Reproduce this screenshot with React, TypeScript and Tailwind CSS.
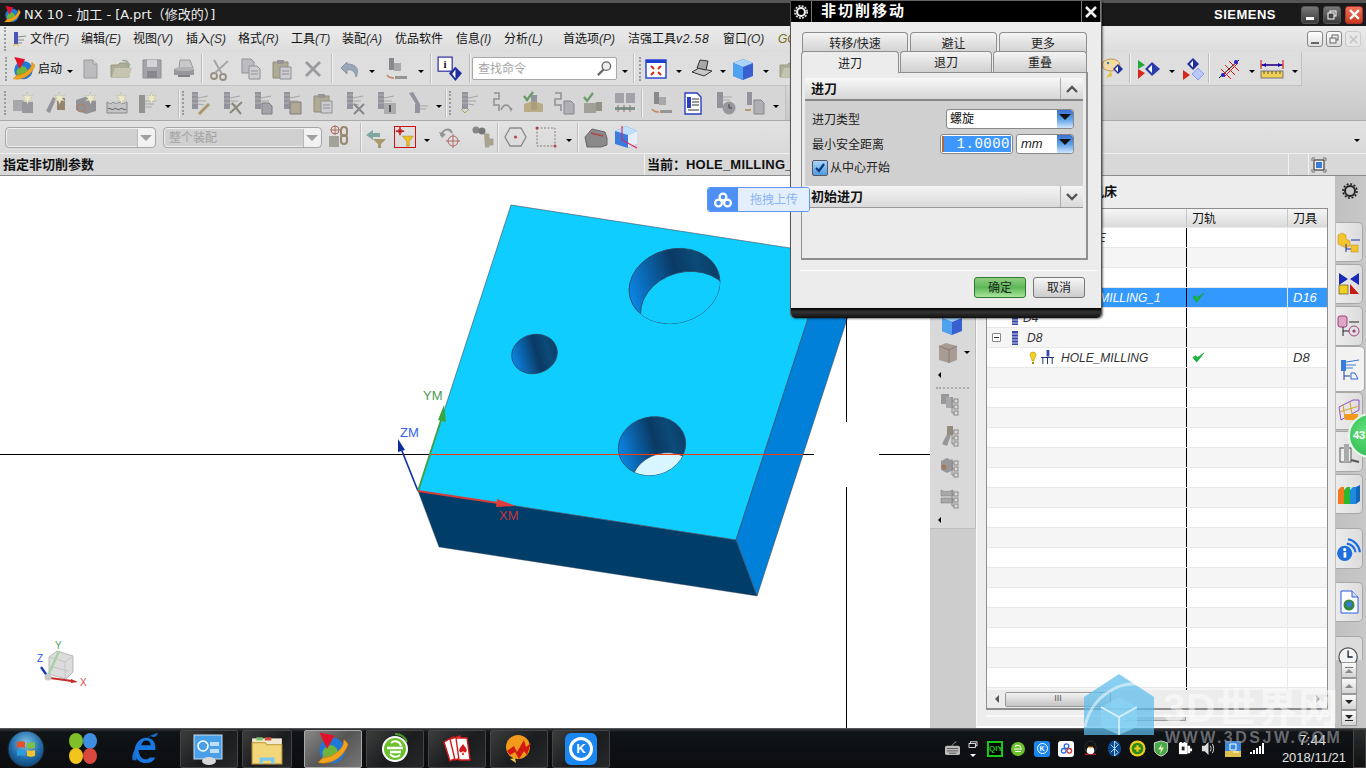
import React from "react";

type P = { children?: React.ReactNode; c?: string; v?: string };
const S = ({ children, c = "w-[24px] h-[24px]", v = "0 0 24 24" }: P) => (
  <svg viewBox={v} className={c + " block"}>{children}</svg>
);

const Slot = ({ c, children }: { c: string; children?: React.ReactNode }) => (
  <div className={c + " h-full flex items-center justify-center shrink-0"}>{children}</div>
);
const Caret = ({ c, dark = true }: { c: string; dark?: boolean }) => (
  <div className={c + " h-full flex items-center justify-center shrink-0 pt-[6px]"}>
    <div className={"w-0 h-0 border-x-[3px] border-x-transparent border-t-[3px] " + (dark ? "border-t-black" : "border-t-[#444]")} />
  </div>
);
const Sep = ({ c }: { c: string }) => (
  <div className={c + " h-full flex items-center justify-center shrink-0"}>
    <div className="w-[2px] h-[29px] bg-[#f2f2f2] border-l border-[#bdbdbd]" />
  </div>
);
const Grip = ({ c }: { c: string }) => (
  <div className={c + " h-full flex items-center justify-center shrink-0"}>
    <div className="w-[2px] h-[24px] border-l-2 border-dotted border-[#9a9a9a]" />
  </div>
);

/* ---------- toolbar icons ---------- */
const NXLogo = ({ c = "w-[26px] h-[26px]" }: { c?: string }) => (
  <S c={c}>
    <circle cx="11.5" cy="13" r="8.5" fill="#1f78d8" />
    <path d="M6 12c3-4 8-3 9 1s-2 7-6 6-5-4-3-7z" fill="#6db53c" />
    <path d="M2 21c8 2 17-3 20-12-1-2-2-3-3-3 1 5-6 11-13 12l1-2z" fill="#f2a21c" stroke="#c9770a" strokeWidth=".4" />
    <path d="M3 1l10 2-5 9z" fill="#e3122a" />
  </S>
);
const G = "#a8a8ab";
const D = "#88888d";
const Doc = () => <S><path d="M6 3h9l4 4v14H6z" fill="#bcbcbe" stroke="#9a9a9c" /><path d="M15 3v4h4" fill="#dcdcdc" stroke="#9a9a9c" /></S>;
const Folder = () => <S><path d="M2 8h7l2-2h9v14H2z" fill="#aeae98" stroke="#999a80" /><path d="M3 20l3-9h17l-3 9z" fill="#c4c4b0" /><path d="M13 3c4-1 7 1 7 4l2 0-3 3-3-3h2c0-2-2-3-5-3z" fill="#98ae98" /></S>;
const Save = () => <S><path d="M3 3h18v18H3z" fill="#a4a4aa" stroke="#8e8e94" /><path d="M7 3h10v7H7z" fill="#d4d4d6" /><path d="M7 14h10v7H7z" fill="#88888d" /></S>;
const Printer = () => <S><path d="M8 3h10l3 8H7z" fill="#c8c8ca" stroke="#9a9a9c" /><path d="M2 12h20v6H2z" fill="#98989c" /><path d="M6 18h12v2H6z" fill="#808084" /><ellipse cx="12" cy="12" rx="10" ry="2" fill="#b2b2b5" /></S>;
const Scissors = () => <S><circle cx="6" cy="19" r="3" fill="none" stroke="#96907e" strokeWidth="1.800" /><circle cx="15" cy="20" r="3" fill="none" stroke="#96907e" strokeWidth="1.800" /><path d="M7 16L20 4M14 17L6 3" stroke="#a6a6a6" strokeWidth="2" /></S>;
const CopyI = () => <S><path d="M3 2h9l3 3v11H3z" fill="#bcbcc0" stroke="#909095" /><path d="M10 9h8l3 3v10H10z" fill="#cdcdd1" stroke="#909095" /><path d="M12 14h7M12 17h7" stroke="#909095" /></S>;
const Paste = () => <S><path d="M3 5h15v16H3z" fill="#aeaa94" stroke="#908d78" /><path d="M7 3h7v4H7z" fill="#969696" /><path d="M10 10h11v12H10z" fill="#cdcdd1" stroke="#909095" /><path d="M12 14h7M12 17h7" stroke="#909095" /></S>;
const XI = () => <S><path d="M5 5l14 14M19 5L5 19" stroke="#9a9a9e" strokeWidth="2.800" /></S>;
const Undo = () => <S><path d="M9 5L3 11l6 6v-4c5-1 8 1 9 7 3-6 2-13-9-13z" fill="#9aa7ba" stroke="#8794a8" /></S>;
const Mach = () => <S><rect x="4" y="1" width="5" height="12" fill={D} /><path d="M9 6h7v8H9z" fill={G} /><path d="M10 19h12v3H10z" fill="#969696" /><path d="M2 18c2 3 4 3 7 3" stroke="#c28a6a" strokeWidth="1.6" fill="none" /></S>;
const InfoD = () => (
  <S c="w-[26px] h-[26px]">
    <rect x="1" y="1" width="13" height="13" fill="#fff" stroke="#1a1a9a" />
    <text x="7.5" y="11" fontSize="10" fontWeight="700" textAnchor="middle" fontFamily="Liberation Serif" fill="#111">i</text>
    <path d="M17 10l6 6-6 7-6-7z" fill="#1f2f9e" /><path d="M17 12.5v8l-3-4z" fill="#fff" />
  </S>
);
const Fit = () => (
  <S><rect x="2" y="3" width="20" height="18" fill="#fff" stroke="#1f3fcf" strokeWidth="1.4" /><rect x="2" y="3" width="20" height="3" fill="#1f3fcf" /><path d="M7 9l3 3M17 9l-3 3M7 18l3-3M17 18l-3-3" stroke="#e02a10" strokeWidth="2" /></S>
);
const Open = () => <S><path d="M2 15l7-4 13 3-8 5z" fill="#c8c8c8" stroke="#333" /><path d="M7 11l3-8 8 1-2 9z" fill="#a8a8a8" stroke="#333" /></S>;
const Cube = ({ c }: { c?: string }) => <S c={c}><path d="M12 2l10 4v13l-10 4-10-4V6z" fill="#3a5fd0" /><path d="M2 6l10-4 10 4-10 4z" fill="#a7d4f7" /><path d="M2 6l10 4v13L2 19z" fill="#4fa2ee" /></S>;
const PaintPal = () => <S><ellipse cx="10" cy="8" rx="9" ry="6" fill="#f4d9a8" stroke="#bb9355" /><circle cx="7" cy="6" r="1.2" fill="#28a" /><circle cx="11" cy="5" r="1.2" fill="#ee4" /><path d="M10 14l-5 7 6-2z" fill="#e8c03c" /><path d="M17 7l5 5-5 5-5-5z" fill="#1f2f9e" /><path d="M17 9v6l-3-3z" fill="#fff" /></S>;
const FlagsD = () => <S><path d="M1 3l7 5-7 4z" fill="#23a83c" /><path d="M1 12l7 4-7 6z" fill="#d7261e" /><path d="M15 5l8 7-8 7-7-7z" fill="#2a3da8" /><path d="M15 8v8l-4-4z" fill="#fff" /></S>;
const FlagsD2 = () => <S><path d="M12 1l6 6-6 6-6-6z" fill="#1f2f9e" /><path d="M12 3.5v7l-3-3.5z" fill="#fff" /><path d="M2 13l7 5-7 5z" fill="#d7261e" /><path d="M17 11l6 6-6 6-6-6z" fill="#b8c8f8" stroke="#8aa0ee" /></S>;
const Grid = () => <S><path d="M1 21L21 3" stroke="#111" /><path d="M3 12l10 10M7 8l10 10M11 4l10 10" stroke="#e11" /><path d="M6 20l14-14" stroke="#e11" /><circle cx="5" cy="18" r="2" fill="#22c" /><circle cx="18" cy="5" r="2" fill="#22c" /></S>;
const Ruler = () => <S><path d="M1 8h22M1 3v9M23 3v9" stroke="#c00" strokeWidth="1" /><path d="M2 8h20" stroke="#11a" strokeWidth="1.4" /><path d="M2 8l4-2v4zM22 8l-4-2v4z" fill="#11a" /><rect x="1" y="14" width="22" height="7" fill="#f0d050" stroke="#777" /><path d="M4 14v3M8 14v3M12 14v3M16 14v3M20 14v3" stroke="#555" /></S>;

const Op = ({ children }: P) => (
  <S>
    <rect x="4" y="1" width="6" height="17" fill="#93939d" />
    <path d="M4 4h6M4 8h6M4 12h6" stroke="#b0b0b0" />
    <path d="M10 7l10-2M10 10h8M10 13l6 1" stroke="#a6a6a6" strokeWidth="1.2" />
    {children}
  </S>
);
const Spark = ({ children }: P) => (
  <S>
    {children}
    <path d="M16 1l1.6 4 4-1-2.6 3.4 3 2.6-4-.4-1.4 4-1.4-4-4 .4 3-2.6L11.400 4l4 1z" fill="#eeebc4" stroke="#aaa" strokeWidth=".4" />
  </S>
);
const Check = () => <path d="M2 6l3 4 6-8" stroke="#6a9a6a" strokeWidth="2.2" fill="none" />;

const Row1 = () => (
  <div className="h-[34px] w-[1302px] flex bg-[#dedede] border-r border-b border-[#c2c2c2] pl-[3px]">
    <Grip c="w-[6px]" />
    <Slot c="w-[29px]"><NXLogo /></Slot>
    <div className="w-[26px] h-full flex items-center text-[12px] shrink-0">启动</div>
    <Caret c="w-[11px]" />
    <Slot c="w-[30px]"><Doc /></Slot>
    <Slot c="w-[31px]"><Folder /></Slot>
    <Slot c="w-[32px]"><Save /></Slot>
    <Slot c="w-[31px]"><Printer /></Slot>
    <Sep c="w-[6px]" />
    <Slot c="w-[30px]"><Scissors /></Slot>
    <Slot c="w-[31px]"><CopyI /></Slot>
    <Slot c="w-[31px]"><Paste /></Slot>
    <Slot c="w-[32px]"><XI /></Slot>
    <Sep c="w-[6px]" />
    <Slot c="w-[29px]"><Undo /></Slot>
    <Caret c="w-[16px]" />
    <Slot c="w-[33px]"><Mach /></Slot>
    <Caret c="w-[16px]" />
    <Sep c="w-[4px]" />
    <Slot c="w-[34px]"><InfoD /></Slot>
    <Sep c="w-[5px]" />
    <div className="w-[145px] h-[23px] mt-[5px] shrink-0 bg-white border border-[#a8a8a8] rounded-[2px] flex items-center justify-between pl-[5px] pr-[3px] text-[12px] text-[#a4a4a4]">
      查找命令
      <svg viewBox="0 0 18 18" className="w-[17px] h-[17px]"><circle cx="11" cy="6.500" r="4.500" fill="#eee" stroke="#666" strokeWidth="1.400" /><path d="M8 10l-6 6" stroke="#666" strokeWidth="2.400" /></svg>
    </div>
    <Caret c="w-[15px]" />
    <Sep c="w-[4px]" />
    <Grip c="w-[8px]" />
    <Slot c="w-[24px]"><Fit /></Slot>
    <Caret c="w-[22px]" />
    <Slot c="w-[24px]"><Open /></Slot>
    <Caret c="w-[17px]" />
    <Slot c="w-[24px]"><Cube /></Slot>
    <Caret c="w-[22px]" />
    <Slot c="w-[26px]"><Folder /></Slot>
    <div className="w-[297px] shrink-0" />
    <Slot c="w-[26px]"><PaintPal /></Slot>
    <Sep c="w-[7px]" />
    <Slot c="w-[31px]"><FlagsD /></Slot>
    <Caret c="w-[16px]" />
    <Slot c="w-[25px]"><FlagsD2 /></Slot>
    <Sep c="w-[8px]" />
    <Slot c="w-[34px]"><Grid /></Slot>
    <Caret c="w-[10px]" />
    <Slot c="w-[30px]"><Ruler /></Slot>
    <Caret c="w-[15px]" />
  </div>
);

const Row2 = () => (
  <div className="h-[34px] w-[786px] flex bg-[#d6d6d6] border-r border-[#c2c2c2] pl-[3px]">
    <Grip c="w-[4px]" />
    <Slot c="w-[31px]"><Spark><rect x="2" y="9" width="11" height="11" fill={G} /><rect x="11" y="11" width="11" height="11" fill="#98989c" /></Spark></Slot>
    <Slot c="w-[34px]"><Spark><path d="M3 20l7-14 3 2-6 14z" fill="#94949a" /><rect x="14" y="7" width="8" height="12" fill="#94866a" /></Spark></Slot>
    <Slot c="w-[27px]"><Spark><path d="M2 9l9-3 11 4v10l-10 3-10-4z" fill="#929296" /><circle cx="7" cy="17" r="4" fill="none" stroke="#b87a5c" /></Spark></Slot>
    <Slot c="w-[36px]"><Spark><path d="M2 11c3 2 4 2 6 0 3 2 4 2 6 0 3 2 4 2 8 0v11H2z" fill="#c4c4c6" stroke="#86868b" /><path d="M3 18c2-2 4 2 6 0s4 2 6 0 4 2 6 0" stroke="#555" fill="none" /></Spark></Slot>
    <Slot c="w-[24px]"><Spark><rect x="4" y="4" width="6" height="18" fill="#94948e" /><path d="M10 10h11M10 13h9M10 16h7" stroke="#aaa" /></Spark></Slot>
    <Caret c="w-[18px]" />
    <Sep c="w-[4px]" />
    <Grip c="w-[4px]" />
    <Slot c="w-[30px]"><Op><path d="M10 22l7-7 3-3 2 2-3 3-7 7z" fill="#a8946a" /></Op></Slot>
    <Slot c="w-[34px]"><Op><path d="M10 22L22 11M12 12l9 11" stroke="#88887c" strokeWidth="2" /></Op></Slot>
    <Slot c="w-[27px]"><Op><path d="M11 12h7l3 3v8H11z" fill="#a4a4a8" stroke="#7c7c82" /></Op></Slot>
    <Slot c="w-[32px]"><Op><path d="M10 11h11v12H10z" fill="#aea894" stroke="#7c7c82" /></Op></Slot>
    <Slot c="w-[30px]"><Paste /></Slot>
    <Slot c="w-[33px]"><Op><path d="M11 13l10 10M21 13L11 23" stroke="#88888d" strokeWidth="2.200" /></Op></Slot>
    <Slot c="w-[30px]"><Op><rect x="10" y="12" width="12" height="11" fill="#acacb0" /><rect x="15" y="14" width="2" height="7" fill="#555" /></Op></Slot>
    <Slot c="w-[33px]"><S><path d="M3 2l4-1 7 12-3 2z" fill="#93939d" /><rect x="9" y="13" width="5" height="9" fill="#93939d" /><path d="M14 15h8M14 18h6" stroke="#a6a6a6" /></S></Slot>
    <Caret c="w-[10px]" />
    <Sep c="w-[4px]" />
    <Grip c="w-[4px]" />
    <Slot c="w-[36px]"><Op><path d="M3 18l4 4 4-4" stroke="#b5a060" fill="none" /></Op></Slot>
    <Slot c="w-[27px]"><S><path d="M4 2H9V8H4v6h5v6" stroke="#939393" strokeWidth="1.600" fill="none" /><path d="M11 19c3-7 8-6 10 0l1-2" stroke="#939393" strokeWidth="1.600" fill="none" /></S></Slot>
    <Slot c="w-[36px]"><S><rect x="10" y="4" width="6" height="15" fill="#93939d" /><path d="M3 13l9-3 10 3v8H3z" fill="#b0a070" opacity=".8" /><path d="M3 5l3 4 6-8" stroke="#6a9a6a" strokeWidth="2.400" fill="none" /></S></Slot>
    <Slot c="w-[25px]"><S><path d="M3 2h6v6H3v6h6v6" stroke="#939393" strokeWidth="1.600" fill="none" /><path d="M12 10h7l3 3v10H12z" fill="#b0b0b4" stroke="#86868b" /></S></Slot>
    <Slot c="w-[36px]"><S><Check /><path d="M2 12h12v10H2z" fill="#a0a098" /><rect x="14" y="11" width="6" height="9" fill="#929288" /></S></Slot>
    <Slot c="w-[26px]"><S><path d="M2 2h9v10H2zM13 2h9v10h-9z" fill="#a2a2a8" /><path d="M2 16h20v3H2z" fill="#7a9a90" /><path d="M5 14v7M11 14v7M17 14v7" stroke="#a06a6a" /></S></Slot>
    <Sep c="w-[8px]" />
    <Slot c="w-[32px]"><Mach /></Slot>
    <Slot c="w-[30px]"><S><path d="M4 2h12l4 4v17H4z" fill="#fff" stroke="#2a3fbf" strokeWidth="1.400" /><rect x="6" y="6" width="4" height="11" fill="#2a3fbf" /><path d="M11 8h7M11 11h7M11 14h7M7 19h11" stroke="#333" /></S></Slot>
    <Slot c="w-[34px]"><S><rect x="4" y="1" width="6" height="16" fill="#93939d" /><path d="M10 6h9M10 9h7" stroke="#aaa" /><circle cx="16" cy="17" r="6.500" fill="#98989c" /><path d="M16 13v4h3" stroke="#444" fill="none" /></S></Slot>
    <Slot c="w-[26px]"><S><rect x="4" y="1" width="5" height="13" fill="#93939d" /><path d="M11 9h7l3 3v11H11z" fill="#aeaeb3" stroke="#86868b" /><path d="M2 19h6" stroke="#b08a5c" strokeWidth="1.600" /></S></Slot>
    <Caret c="w-[15px]" />
  </div>
);

const DD = ({ c, t }: { c: string; t?: string }) => (
  <div className={c + " h-[19px] mt-[7px] shrink-0 bg-[#d0d0d0] border border-[#f0f0f0] outline outline-[#a6a6a6] rounded-[3px] flex items-center justify-between text-[12px] text-[#a2a2a2] pl-[4px]"}>
    <span>{t}</span>
    <span className="w-[17px] h-[18px] bg-[#f2f2f2] border-l border-[#bbb] flex items-center justify-center">
      <span className="w-0 h-0 border-x-[6px] border-x-transparent border-t-[6px] border-t-[#a0a0a0]" />
    </span>
  </div>
);

const Row3 = () => (
  <div className="h-[33px] flex bg-[linear-gradient(#e2e2e2,#d9d9d9)] border-t border-[#a9a9a9]">
    <div className="w-[6px] shrink-0" />
    <DD c="w-[149px]" />
    <div className="w-[9px] shrink-0" />
    <DD c="w-[157px]" t="整个装配" />
    <Slot c="w-[38px]"><S><rect x="1" y="11" width="10" height="11" fill="#a2a29a" /><circle cx="7" cy="5" r="4" fill="none" stroke="#b06a60" /><path d="M7 0v10M2 5h10" stroke="#b06a60" /><rect x="13" y="2" width="6" height="9" rx="3" fill="none" stroke="#968870" strokeWidth="2" /><rect x="13" y="10" width="6" height="9" rx="3" fill="none" stroke="#968870" strokeWidth="2" /></S></Slot>
    <Sep c="w-[4px]" />
    <Slot c="w-[24px]"><S><path d="M10 5L3 10l7 5v-3h7V8h-7z" fill="#7fa8a0" /><path d="M10 14h13l-5 5v4h-3v-4z" fill="#a8986a" /></S></Slot>
    <Slot c="w-[36px]">
      <div className="w-[22px] h-[22px] border border-[#cc1111] flex items-center justify-center">
        <S c="w-[20px] h-[20px]"><path d="M6 0v10M1 5h10" stroke="#900" strokeWidth="1.400" /><circle cx="6" cy="5" r="2.500" fill="none" stroke="#e11" /><path d="M9 11h13l-5 6v6h-3v-6z" fill="#f0c020" stroke="#a07c10" strokeWidth=".6" /></S>
      </div>
    </Slot>
    <Caret c="w-[8px]" />
    <Slot c="w-[38px]"><S><path d="M3 11C5 3 12 3 14 8" stroke="#939393" strokeWidth="2" fill="none" /><path d="M1 7l3 6 4-4z" fill="#939393" /><circle cx="15" cy="16" r="5" fill="none" stroke="#b06a60" /><path d="M15 9v14M8 16h14" stroke="#b06a60" /></S></Slot>
    <Slot c="w-[26px]"><S><circle cx="6" cy="5" r="3.500" fill="#868686" /><circle cx="12" cy="6" r="3.500" fill="#767676" /><path d="M14 9h5v13h-4M17 14h6v6h-6z" stroke="#a2a2a2" fill="#ada288" /></S></Slot>
    <Sep c="w-[6px]" />
    <Slot c="w-[28px]"><S><path d="M7 3h11l5 9-5 9H7l-5-9z" fill="none" stroke="#8a8a8a" strokeWidth="1.300" /><circle cx="12.500" cy="12" r="1.500" fill="#b0444c" /></S></Slot>
    <Slot c="w-[34px]"><S><rect x="3" y="3" width="18" height="18" fill="none" stroke="#8a7a7a" strokeDasharray="2 1.500" /><circle cx="3" cy="3" r="1.500" fill="#b0444c" /><circle cx="21" cy="21" r="1.500" fill="#b0444c" /></S></Slot>
    <Caret c="w-[12px]" />
    <Sep c="w-[6px]" />
    <Slot c="w-[30px]"><S><path d="M1 12L8 4l13 3 2 6v7L17 22H3z" fill="#8a8a8a" stroke="#666" /><path d="M7 8l12 3" stroke="#b04444" strokeWidth="1.400" /></S></Slot>
    <Slot c="w-[30px]"><S><path d="M12 1l11 5v13l-9 4-13-4V6z" fill="#3a7be0" /><path d="M1 6l11-5 11 5-9 4z" fill="#bfe0fb" /><path d="M14 10l9-4v13l-9 4z" fill="#e8eef8" /><path d="M8 1v14l15 8" stroke="#e0205a" strokeWidth="1.100" fill="none" /></S></Slot>
    <div className="flex-1" />
    <Caret c="w-[18px]" />
  </div>
);

/* ---------- viewport ---------- */
const Viewport = () => (
  <svg viewBox="0 176 930 552" className="w-[930px] h-[552px] block shrink-0 bg-white">
    <defs>
      <linearGradient id="wall" x1="0" x2="1" y1="0" y2="0">
        <stop offset="0" stopColor="#0b86e6" />
        <stop offset=".55" stopColor="#0a3a64" />
        <stop offset=".8" stopColor="#0c4a78" />
        <stop offset="1" stopColor="#0b3f6a" />
      </linearGradient>
      <clipPath id="h1"><ellipse cx="674.500" cy="286" rx="46" ry="37" transform="rotate(-15 674.500 286)" /></clipPath>
      <clipPath id="h3"><ellipse cx="652" cy="446" rx="34" ry="29" transform="rotate(-15 652 446)" /></clipPath>
    </defs>
    <path d="M511 205L829 254 736 540 418 491z" fill="#10cdff" stroke="#3a4a5a" strokeWidth=".6" />
    <path d="M829 254L850 310 757 596 736 540z" fill="#0080d9" stroke="#3a4a5a" strokeWidth=".6" />
    <path d="M418 491L736 540 757 596 439 547z" fill="#003d69" stroke="#556" strokeWidth=".4" />

    <ellipse cx="674.500" cy="286" rx="46" ry="37" transform="rotate(-15 674.500 286)" fill="url(#wall)" stroke="#2a4a66" strokeWidth=".8" />
    <g clipPath="url(#h1)"><ellipse cx="686" cy="309" rx="46" ry="37" transform="rotate(-15 686 309)" fill="#10cdff" stroke="#2a4a66" strokeWidth=".8" /></g>
    <ellipse cx="534.500" cy="354" rx="23" ry="19.500" transform="rotate(-15 534.500 354)" fill="url(#wall)" stroke="#2a4a66" strokeWidth=".8" />
    <ellipse cx="652" cy="446" rx="34" ry="29" transform="rotate(-15 652 446)" fill="url(#wall)" stroke="#2a4a66" strokeWidth=".8" />
    <g clipPath="url(#h3)"><ellipse cx="665" cy="482" rx="34" ry="29" transform="rotate(-15 665 482)" fill="#d8f6ff" stroke="#2a4a66" strokeWidth=".8" /></g>

    <path d="M0 454.500H430M803 454.500H814M879 454.500H930" stroke="#000" strokeWidth="1" />
    <path d="M430 454.500H803" stroke="#ff3a00" strokeWidth="1" />
    <path d="M846.500 318V422M846.500 487V728" stroke="#000" strokeWidth="1" />

    <path d="M418 491L402 451" stroke="#0a2da0" strokeWidth="1.600" />
    <path d="M398 439l7 11-7 2z" fill="#0a2da0" />
    <text x="400" y="437" fontSize="13" fill="#3a62e8" fontFamily="Liberation Sans">ZM</text>
    <path d="M418 491L441 420" stroke="#3fa03f" strokeWidth="1.800" />
    <path d="M444 405l2 17-8-2z" fill="#3aa53a" />
    <text x="423" y="400" fontSize="13" fill="#4f9a55" fontFamily="Liberation Sans">YM</text>
    <path d="M418 491L498 503" stroke="#d83a3a" strokeWidth="1.800" />
    <path d="M516 506l-19-7-1 8z" fill="#e23b3b" />
    <text x="499" y="520" fontSize="13" fill="#c9323c" fontFamily="Liberation Sans">XM</text>

    <g>
      <path d="M49 657l8-6 16 5 0 16-7 7-17-5z" fill="#dcdcdc" stroke="#b8b8b8" />
      <path d="M49 657l16 5 8-6M65 662v17M53 667l15 4" stroke="#c4c4c4" fill="none" />
      <path d="M48 676L59 651" stroke="#a6d2a6" strokeWidth="2.400" />
      <path d="M48 677l-7-10" stroke="#1a3bb8" strokeWidth="2.400" />
      <path d="M50 678l22 3" stroke="#c82a2a" strokeWidth="2" />
      <path d="M78 682l-7-3v4z" fill="#c82a2a" />
      <circle cx="48" cy="677" r="3.500" fill="#c8c8c8" />
      <text x="55" y="649" fontSize="10" fill="#4fa05a" fontFamily="Liberation Sans">Y</text>
      <text x="37" y="662" fontSize="10" fill="#2a5adf" fontFamily="Liberation Sans">Z</text>
      <text x="80" y="686" fontSize="10" fill="#d84a4a" fontFamily="Liberation Sans">X</text>
    </g>
  </svg>
);

/* ---------- left palette ---------- */
const Tree = () => (
  <>
    <rect x="14" y="6" width="4" height="4" fill="none" stroke="#888" />
    <rect x="14" y="12" width="4" height="4" fill="none" stroke="#888" />
    <rect x="14" y="18" width="4" height="4" fill="none" stroke="#888" />
    <path d="M12 4v16h2M12 8h2M12 14h2" stroke="#888" fill="none" />
  </>
);
const LeftBar = () => (
  <div className="w-[46px] shrink-0 h-full bg-[#cdcdcd]">
    <div className="h-[353px] bg-[#d9d9d9] border-b border-r border-[#bdbdbd] flex flex-col">
      <div className="h-[134px] shrink-0" />
      <div className="h-[28px] flex items-center pl-[10px] shrink-0"><Cube c="w-[24px] h-[24px]" /></div>
      <div className="h-[28px] flex items-center pl-[6px] shrink-0">
        <S><path d="M3 6l7-3 11 3v14l-8 3-10-3z" fill="#a69c94" /><path d="M3 6l10 4v13M13 10l8-4" stroke="#867c74" fill="none" /></S>
        <div className="w-0 h-0 ml-[4px] border-x-[3px] border-x-transparent border-t-[3px] border-t-black" />
      </div>
      <div className="h-[18px] flex items-center pl-[8px] shrink-0"><div className="w-0 h-0 border-y-[3px] border-y-transparent border-r-[3px] border-r-black" /></div>
      <div className="h-[3px] mx-[6px] border-t-2 border-dotted border-[#aaa] shrink-0 mt-[3px]" />
      <div className="pl-[10px] flex flex-col gap-[7px] mt-[3px]">
        <S><rect x="1" y="1" width="8" height="10" fill="#98989c" /><rect x="6" y="4" width="7" height="11" fill="#a8a8ac" /><Tree /></S>
        <S><path d="M2 20l5-10 4 1-4 11z" fill="#98989c" /><rect x="7" y="2" width="6" height="9" fill="#948c7c" /><Tree /></S>
        <S><path d="M1 6l6-3 6 3v9l-6 3-6-3z" fill="#98989c" /><circle cx="4" cy="12" r="2.500" fill="#a07a5c" /><Tree /></S>
        <S><path d="M1 4c3 2 8 2 12 0v6H1zM1 12h12v5H1z" fill="#a8a8ac" stroke="#777" strokeWidth=".5" /><Tree /></S>
      </div>
      <div className="h-[18px] flex items-center pl-[8px] mt-[2px]"><div className="w-0 h-0 border-y-[3px] border-y-transparent border-r-[3px] border-r-black" /></div>
    </div>
  </div>
);

/* ---------- navigator ---------- */
const Chk = () => (
  <svg viewBox="0 0 14 14" className="w-[13px] h-[13px] block"><path d="M1 7l4 5 8-10-7 5-2-2z" fill="#18b83c" stroke="#0f9a2c" strokeWidth=".6" /></svg>
);
const Dr = () => (
  <svg viewBox="0 0 8 14" className="w-[8px] h-[14px] block shrink-0"><rect x="1" y="0" width="6" height="14" fill="#3a46a8" /><path d="M1 3h6M1 6h6M1 9h6M1 12h6" stroke="#c8d0f0" /></svg>
);
const rows: { a?: React.ReactNode; b?: boolean; d?: string; sel?: boolean }[] = [
  { a: <span className="pl-[2px] italic">GENERIC_MACHINE</span> },
  {},
  {},
  { a: <span className="pl-[73px]">HOLE_MILLING_1</span>, b: true, d: "D16", sel: true },
  { a: <span className="pl-[24px] flex items-center gap-[4px]"><Dr />D4</span> },
  {
    a: (
      <span className="pl-[5px] flex items-center">
        <span className="w-[9px] h-[9px] border border-[#888] rounded-[1px] bg-white flex items-center justify-center mr-[10px]"><span className="w-[5px] h-px bg-[#333]" /></span>
        <Dr />
        <span className="ml-[8px]">D8</span>
      </span>
    ),
  },
  {
    a: (
      <span className="pl-[42px] flex items-center">
        <svg viewBox="0 0 8 14" className="w-[8px] h-[14px] shrink-0"><path d="M1 4a3 3 0 116 0c0 2-2 3-2 6H3c0-3-2-4-2-6z" fill="#f2d020" stroke="#a08810" strokeWidth=".5" /><rect x="3" y="11" width="2" height="2" fill="#a08810" /></svg>
        <svg viewBox="0 0 16 16" className="w-[15px] h-[15px] ml-[3px] shrink-0"><rect x="7" y="0" width="3" height="7" fill="#3a46a8" /><path d="M1 8h14M3 8v7M8 8v7M13 8v7" stroke="#1a2a70" fill="none" /></svg>
        <span className="ml-[6px]">HOLE_MILLING</span>
      </span>
    ),
    b: true,
    d: "D8",
  },
  ...Array.from({ length: 17 }, () => ({})),
];

const Nav = () => (
  <div className="w-[359px] shrink-0 h-full bg-[#ededed] border-l border-[#f8f8f8] flex flex-col pl-[9px] pr-[7px] border-b-2 border-b-white">
    <div className="h-[32px] w-[140px] -ml-[9px] text-right text-[13px] font-bold flex items-center justify-end shrink-0">工序导航器 - 机床</div>
    <div className="h-[502px] w-[342px] border-2 border-[#8e8e8e] border-t border-r border-l bg-white flex flex-col overflow-hidden shrink-0">
      <div className="h-[19px] flex shrink-0 text-[12px] bg-[linear-gradient(#f6f6f6,#dadada)] border-b border-[#e8e8e8] text-[#111]">
        <div className="w-[200px] border-r border-[#c8c8c8] shrink-0" />
        <div className="w-[101px] border-r border-[#c8c8c8] shrink-0 pl-[5px] leading-[20px]">刀轨</div>
        <div className="flex-1 pl-[5px] leading-[20px]">刀具</div>
      </div>
      <div className="flex-1 overflow-hidden">
        {rows.map((r, i) => (
          <div key={i} className={"h-[20px] flex text-[12px] italic items-center border-b border-[#e8e8e8] " + (r.sel ? "bg-[#3399ff] text-white" : i % 2 ? "bg-[#f5f5f5] text-[#333]" : "bg-white text-[#333]")}>
            <div className="w-[200px] shrink-0 h-full flex items-center border-r border-black font-['Liberation_Sans']">{r.a}</div>
            <div className="w-[101px] shrink-0 h-full flex items-center pl-[5px] border-r border-[#e8e8e8]">{r.b && <Chk />}</div>
            <div className="flex-1 pl-[5px] text-[13px] font-['Liberation_Sans']">{r.d}</div>
          </div>
        ))}
      </div>
      <div className="h-[18px] shrink-0 flex items-center bg-[#ececec] pl-[8px] relative">
        <div className="w-0 h-0 border-y-[4px] border-y-transparent border-r-[4px] border-r-[#555]" />
        <div className="ml-[6px] w-[106px] h-[15px] border border-[#999] rounded-[2px] bg-[linear-gradient(#f2f2f2,#c4c4c4)] flex items-center justify-center text-[9px] text-[#555]">III</div>
        <div className="ml-auto mr-[7px] w-0 h-0 border-y-[4px] border-y-transparent border-l-[4px] border-l-[#aaa]" />
      </div>
    </div>
    <div className="mt-[5px] h-[4px] border-t-2 border-[#f8f8f8] flex">
      <div className="ml-[139px] w-[61px] h-[4px] bg-[#cfcfcf] border-b border-r border-[#999]" />
    </div>
  </div>
);

/* ---------- right tab bar ---------- */
const Tab = ({ c, children }: { c: string; children?: React.ReactNode }) => (
  <div className={c + " w-[27px] shrink-0 bg-[linear-gradient(90deg,#ececec,#dcdcdc)] border border-l-0 border-[#a8a8a8] rounded-r-[5px] flex items-center justify-center"}>{children}</div>
);
const Spin = ({ up, bar }: { up?: boolean; bar?: boolean }) => (
  <div className="w-[16px] h-[16px] border border-[#999] bg-[linear-gradient(#fafafa,#d4d4d4)] flex flex-col items-center justify-center gap-px">
    {bar && up && <div className="w-[8px] h-px bg-[#777]" />}
    <div className={"w-0 h-0 border-x-[4px] border-x-transparent " + (up ? "border-b-[4px] border-b-[#888]" : "border-t-[4px] border-t-[#222]")} />
    {bar && !up && <div className="w-[8px] h-px bg-[#222]" />}
  </div>
);
const RightBar = () => (
  <div className="w-[31px] shrink-0 h-full bg-[linear-gradient(90deg,#c0c0c0,#c8c8c8)] flex flex-col pl-px relative overflow-hidden">
    <div className="h-[30px] flex items-center justify-center pr-[2px] shrink-0">
      <svg viewBox="0 0 16 16" className="w-[16px] h-[16px]"><circle cx="8" cy="8" r="5" fill="none" stroke="#222" strokeWidth="2" /><circle cx="8" cy="8" r="7" fill="none" stroke="#222" strokeWidth="1.600" strokeDasharray="2 1.660" /></svg>
    </div>
    <div className="h-[16px] shrink-0" />
    <Tab c="h-[40px]"><svg viewBox="0 0 24 24" className="w-[24px] h-[24px]"><path d="M1 5l4-2 4 2v4l4 2v5l-4 2-4-2-4-2z" fill="#f2c431" stroke="#b8860b" strokeWidth=".5" /><path d="M14 10h9M9 14v8M9 19h5" stroke="#1a2ea8" /><rect x="14" y="15" width="7" height="7" fill="#f2c431" stroke="#b8860b" strokeWidth=".5" /></svg></Tab>
    <div className="h-[2px] shrink-0" />
    <Tab c="h-[40px]"><svg viewBox="0 0 24 24" className="w-[24px] h-[24px]"><path d="M2 1l9 6-9 6zM22 1l-9 6 9 6z" fill="#1a2ab8" /><rect x="2" y="13" width="9" height="9" fill="#f2d020" stroke="#222" strokeWidth=".5" /><path d="M13 22l9 0-9-10z" fill="#c81818" /></svg></Tab>
    <div className="h-[2px] shrink-0" />
    <Tab c="h-[40px]"><svg viewBox="0 0 24 24" className="w-[24px] h-[24px]"><rect x="1" y="2" width="9" height="11" rx="2" fill="#dca6c4" stroke="#a0407a" /><path d="M12 8h10M6 13v9M6 17h6" stroke="#222" /><circle cx="17" cy="17" r="5" fill="none" stroke="#a0407a" /><circle cx="17" cy="17" r="1.600" fill="#a0407a" /></svg></Tab>
    <div className="w-[29px] h-[46px] shrink-0 bg-[#f2f2f2] border border-l-0 border-[#a8a8a8] rounded-r-[5px] flex items-center justify-center">
      <svg viewBox="0 0 24 24" className="w-[24px] h-[24px]"><rect x="3" y="3" width="5" height="11" fill="#3a7ad8" /><path d="M8 5l13-2M8 8h10M8 11h7" stroke="#3a7ad8" /><path d="M6 14v9M6 19h6" stroke="#1a3a9a" /><path d="M13 16v6h7l-3-6z" fill="none" stroke="#2a6ac8" /></svg>
    </div>
    <Tab c="h-[38px]"><svg viewBox="0 0 24 24" className="w-[24px] h-[24px]"><path d="M2 8l14-7 6 0v10L4 21z" fill="none" stroke="#8a50c8" /><path d="M2 13l20-6M6 5l2 15M13 3l2 12" stroke="#d8a030" /><rect x="8" y="15" width="13" height="6" fill="#f29a1c" /></svg></Tab>
    <div className="h-[1px] shrink-0" />
    <Tab c="h-[41px]"><svg viewBox="0 0 24 24" className="w-[24px] h-[24px]"><rect x="3" y="8" width="11" height="14" fill="#eee" stroke="#555" /><rect x="7" y="4" width="5" height="18" fill="#aaa" /><path d="M14 20l8 2" stroke="#555" strokeWidth="2" /></svg></Tab>
    <div className="h-[2px] shrink-0" />
    <Tab c="h-[40px]"><svg viewBox="0 0 24 24" className="w-[24px] h-[24px]"><path d="M1 8l3-3h3v17H1z" fill="#f07a1c" /><path d="M7 8l3-3h3v17H7z" fill="#2cb82c" /><path d="M13 8l3-3h3v17h-6z" fill="#1c8ae0" /><path d="M19 5l4-2v16l-4 3z" fill="#1266b8" /></svg></Tab>
    <div className="h-[14px] shrink-0" />
    <Tab c="h-[41px]"><svg viewBox="0 0 24 24" className="w-[26px] h-[26px]"><circle cx="8" cy="16" r="7" fill="#1e6ee0" /><rect x="7" y="15" width="2.500" height="5" fill="#fff" /><circle cx="8" cy="12.500" r="1.500" fill="#fff" /><path d="M10 7a9 9 0 018 8M11 3a13 13 0 0111 12" stroke="#1e6ee0" strokeWidth="2" fill="none" /></svg></Tab>
    <div className="h-[13px] shrink-0" />
    <Tab c="h-[40px]"><svg viewBox="0 0 24 24" className="w-[24px] h-[24px]"><path d="M4 1h11l6 6v16H4z" fill="#fff" stroke="#2a5ae0" /><path d="M15 1v6h6" fill="#dde" stroke="#2a5ae0" /><circle cx="12" cy="15" r="5.500" fill="#2e8a3a" /><path d="M9 13c3-3 6-1 6 2s-4 3-5 1z" fill="#3a7ad8" /></svg></Tab>
    <div className="h-[14px] shrink-0" />
    <div className="w-[27px] h-[24px] shrink-0 bg-[#dcdcdc] border border-l-0 border-b-0 border-[#a8a8a8] rounded-tr-[5px] flex items-start justify-center pt-[9px]">
      <svg viewBox="0 0 24 24" className="w-[22px] h-[22px]"><circle cx="11" cy="12" r="10" fill="#f4f4f4" stroke="#555" strokeWidth="1.400" /><path d="M11 5v7h5" stroke="#123" strokeWidth="1.400" fill="none" /></svg>
    </div>
    <div className="absolute left-[6px] top-[486px] flex flex-col">
      <Spin up bar />
      <Spin up />
      <Spin />
      <Spin bar />
    </div>
  </div>
);

/* ---------- dialog ---------- */
const DTab = ({ c, t, on }: { c: string; t: string; on?: boolean }) => (
  <div className={c + " shrink-0 rounded-t-[4px] border border-b-0 border-[#8f8f8f] flex items-center justify-center text-[12px] pt-[2px] text-[#222] " + (on ? "bg-[#ececec] h-[22px] relative z-10" : "bg-[linear-gradient(#f4f4f4,#d0d0d0)] h-[21px]")}>{t}</div>
);
const Chevron = ({ up }: { up?: boolean }) => (
  <div className="w-[23px] h-full border-l border-[#aaa] flex items-center justify-center shrink-0">
    <svg viewBox="0 0 12 8" className="w-[12px] h-[8px]"><path d={up ? "M1 7l5-5 5 5" : "M1 1l5 5 5-5"} stroke="#555" strokeWidth="2.400" fill="none" /></svg>
  </div>
);
const BlueDrop = () => (
  <div className="w-[16px] h-full rounded-r-[3px] bg-[linear-gradient(#3d6fd0,#5aa0e8_50%,#cfe6fb)] flex items-center justify-center shrink-0">
    <span className="w-0 h-0 border-x-[6px] border-x-transparent border-t-[6px] border-t-[#111] -mt-[4px]" />
  </div>
);

const Dialog = () => (
  <div className="absolute left-[790px] top-0 w-[312px] h-[318px] bg-[#ececec] border-x border-[#555] rounded-b-[5px] shadow-[1px_1px_2px_rgba(0,0,0,.5)] flex flex-col overflow-hidden">
    <div className="h-[22px] bg-black border-t border-[#666] flex items-center shrink-0">
      <div className="w-[20px] flex justify-center"><svg viewBox="0 0 16 16" className="w-[14px] h-[14px]"><circle cx="8" cy="8" r="4.500" fill="none" stroke="#eee" strokeWidth="2.400" /><circle cx="8" cy="8" r="7" fill="none" stroke="#eee" strokeWidth="1.800" strokeDasharray="2.200 1.460" /></svg></div>
      <div className="w-px h-full bg-[#777]" />
      <div className="pl-[9px] text-white font-bold text-[15px] tracking-[2px] flex-1">非切削移动</div>
      <div className="w-[20px] h-full border-x border-[#777] flex items-center justify-center ml-px">
        <svg viewBox="0 0 12 12" className="w-[12px] h-[12px]"><path d="M1 1l10 10M11 1L1 11" stroke="#eee" strokeWidth="2.600" /></svg>
      </div>
    </div>
    <div className="flex-1 pl-[10px] pr-[13px] flex flex-col">
      <div className="mt-[10px] flex pl-[1px] gap-[2px] h-[19px] shrink-0">
        <DTab c="w-[106px]" t="转移/快速" />
        <DTab c="w-[87px]" t="避让" />
        <DTab c="w-[88px]" t="更多" />
      </div>
      <div className="flex h-[21px] shrink-0 gap-px">
        <DTab c="w-[98px]" t="进刀" on />
        <DTab c="w-[92px]" t="退刀" />
        <DTab c="w-[94px]" t="重叠" />
      </div>
      <div className="h-[188px] w-[287px] border border-[#8f8f8f] border-b-2 border-r-2 bg-[#ececec] px-[3px] pt-[5px] shrink-0">
        <div className="h-[23px] bg-[linear-gradient(#f8f8f8,#d6d6d6)] border-b-2 border-[#888] flex items-center pl-[6px] font-bold text-[13px] text-[#111]"><span className="flex-1">进刀</span><Chevron up /></div>
        <div className="h-[85px] bg-[#d0d0d0] pl-[7px] pr-[9px] pt-[8px] text-[12px] text-[#222]">
          <div className="h-[20px] flex items-center justify-between">
            <span className="pt-[1px]">进刀类型</span>
            <div className="w-[128px] h-[20px] bg-white border border-[#888] rounded-[3px] flex items-center pl-[3px] text-[#111]"><span className="flex-1">螺旋</span><BlueDrop /></div>
          </div>
          <div className="h-[20px] mt-[5px] flex items-center">
            <span className="flex-1 pt-[1px]">最小安全距离</span>
            <div className="w-[73px] h-[20px] bg-white border border-[#888] rounded-[3px] p-[1px] flex items-center"><div className="w-full h-full bg-[#3d97ff] text-white text-right pr-[1px] border-l-2 border-[#b46a30] font-['Liberation_Mono'] text-[14px] leading-[16px] tracking-[0.500px]">1.0000</div></div>
            <div className="ml-[3px] w-[58px] h-[20px] bg-white border border-[#888] rounded-[3px] flex items-center pl-[4px] italic font-['Liberation_Sans'] text-[13px]"><span className="flex-1">mm</span><BlueDrop /></div>
          </div>
          <div className="mt-[5px] h-[17px] flex items-center">
            <div className="w-[16px] h-[16px] rounded-[2px] border border-[#556] bg-[linear-gradient(#a8d4f8,#4d9ae0)] flex items-center justify-center">
              <svg viewBox="0 0 12 12" className="w-[12px] h-[12px]"><path d="M2 6l3 3 5-7" stroke="#0a3a80" strokeWidth="2.200" fill="none" /></svg>
            </div>
            <span className="ml-[2px]">从中心开始</span>
          </div>
        </div>
        <div className="h-[22px] bg-[linear-gradient(#f4f4f4,#dadada)] border-b border-[#999] flex items-center font-bold text-[13px] text-[#111] pl-[6px]"><span className="flex-1">初始进刀</span><Chevron /></div>
      </div>
      <div className="mt-[10px] -ml-[1px] w-[298px] border-t border-white h-px shrink-0" />
      <div className="flex justify-end gap-[7px] mt-[6px] pr-[3px] shrink-0 text-[12px]">
        <div className="w-[52px] h-[21px] rounded-[3px] border border-[#2f7a2f] bg-[linear-gradient(#8fce80,#5fb85a_50%,#a9e59a)] flex items-center justify-center text-[#1a2a1a]">确定</div>
        <div className="w-[52px] h-[21px] rounded-[3px] border border-[#777] bg-[linear-gradient(#f6f6f6,#cccccc)] flex items-center justify-center text-[#222]">取消</div>
      </div>
    </div>
    <div className="h-[10px] bg-[linear-gradient(#000,#333_40%,#111)] shrink-0" />
  </div>
);

/* ---------- taskbar ---------- */
const TB = ({ c, on, children }: { c: string; on?: boolean; children?: React.ReactNode }) => (
  <div className={c + " h-[38px] shrink-0 rounded-[2px] border flex items-center justify-center " + (on ? "border-[#aaa] bg-[linear-gradient(135deg,#888,#555_50%,#777)]" : "border-[#444] bg-[linear-gradient(135deg,#3c3c3c,#1a1c1e_55%,#26282a)]")}>{children}</div>
);
const Tray = ({ c, children }: { c: string; children?: React.ReactNode }) => (
  <div className={c + " h-full flex items-center justify-center shrink-0"}>{children}</div>
);
const Taskbar = () => (
  <div className="h-[40px] bg-[linear-gradient(#30343a_0,#111417_8%,#0b0d0f)] border-t border-[#555] flex items-center shrink-0 relative">
    <div className="w-[51px] flex justify-center shrink-0">
      <svg viewBox="0 0 38 38" className="w-[38px] h-[38px]">
        <defs><radialGradient id="orb" cx=".5" cy=".35" r=".7"><stop offset="0" stopColor="#7fc4e8" /><stop offset=".6" stopColor="#1f6aa8" /><stop offset="1" stopColor="#0c3d6c" /></radialGradient></defs>
        <circle cx="19" cy="19" r="18" fill="url(#orb)" stroke="#222" />
        <path d="M10 12c3-1 5-1 8 0v6c-3-1-5-1-8 0z" fill="#e8502a" />
        <path d="M20 12c3 1 5 1 8 0v6c-3 1-5 1-8 0z" fill="#7cc242" />
        <path d="M10 20c3-1 5-1 8 0v6c-3-1-5-1-8 0z" fill="#2a9be0" />
        <path d="M20 20c3 1 5 1 8 0v6c-3 1-5 1-8 0z" fill="#f5c22a" />
      </svg>
    </div>
    <div className="w-[63px] flex justify-center shrink-0">
      <svg viewBox="0 0 32 38" className="w-[32px] h-[38px]"><ellipse cx="9" cy="11" rx="7" ry="8" fill="#7fc02a" /><ellipse cx="23" cy="11" rx="7" ry="8" fill="#3f8fe0" /><ellipse cx="9" cy="26" rx="7" ry="8" fill="#f2c51c" /><ellipse cx="23" cy="26" rx="7" ry="8" fill="#d8483c" /></svg>
    </div>
    <div className="w-[61px] flex justify-center shrink-0">
      <svg viewBox="0 0 32 38" className="w-[30px] h-[36px]"><path d="M9 20h18c1-9-4-13-10-13S5 13 5 21s5 13 12 13c5 0 8-2 10-6h-6c-1 1-2 2-4 2-4 0-7-3-8-10z" fill="#1878e0" /><path d="M12 15h10c0-3-2-5-5-5s-5 2-5 5z" fill="#0b0d0f" /><path d="M3 31C0 22 12 6 30 2c-2 5-5 5-8 3C14 8 6 20 7 31" fill="#1878e0" opacity=".9" /></svg>
    </div>
    <div className="w-[5px] shrink-0" />
    <TB c="w-[58px]"><svg viewBox="0 0 32 32" className="w-[32px] h-[32px]"><rect x="1" y="2" width="28" height="24" fill="#4aa0e8" stroke="#cde" /><circle cx="10" cy="13" r="5" fill="none" stroke="#fff" strokeWidth="1.600" /><path d="M17 9h9v4h-9zM17 16h9v4h-9z" fill="#bfe0fb" /><ellipse cx="16" cy="28" rx="7" ry="4" fill="#d8d8d8" /></svg></TB>
    <div className="w-[4px] shrink-0" />
    <TB c="w-[50px]"><svg viewBox="0 0 32 32" className="w-[34px] h-[34px]"><path d="M2 6h28v6H2z" fill="#f2ead0" /><path d="M2 10h12l2 2h14v18H2z" fill="#f2d67a" stroke="#c8a040" /><path d="M6 5h6v3H6z" fill="#7ac26a" /><path d="M14 5h6v3h-6z" fill="#d84a3c" /><path d="M9 24h14v6h-3v-3h-8v3H9z" fill="#7cc8ec" /></svg></TB>
    <div className="w-[12px] shrink-0" />
    <TB c="w-[58px]" on><NXLogo c="w-[36px] h-[36px]" /></TB>
    <div className="w-[4px] shrink-0" />
    <TB c="w-[58px]"><svg viewBox="0 0 32 32" className="w-[32px] h-[32px]"><circle cx="16" cy="16" r="13" fill="#fff" /><circle cx="16" cy="16" r="11" fill="#6cc02c" /><path d="M8 15h16M11 19h11" stroke="#fff" strokeWidth="2.400" /><path d="M12 10c3-3 9-2 10 3M21 22c-3 3-8 2-10-1" stroke="#fff" strokeWidth="2" fill="none" /><path d="M16 1c7 0 10 3 12 8" stroke="#4aa02a" strokeWidth="2" fill="none" /></svg></TB>
    <div className="w-[4px] shrink-0" />
    <TB c="w-[58px]"><svg viewBox="0 0 32 32" className="w-[32px] h-[32px]"><path d="M3 9l9-5 6 20-9 4z" fill="#fff" stroke="#d21a1a" strokeWidth="1.400" /><path d="M9 6l10-3 4 21-9 3z" fill="#fff" stroke="#d21a1a" strokeWidth="1.400" /><path d="M15 5h11l3 22H18z" fill="#fff" stroke="#d21a1a" strokeWidth="1.400" /><path d="M22 11c3 4 5 6 3 8-1 1-2 0-3-1 0 1 1 3 1 4h-2c0-1 1-3 1-4-1 1-2 2-3 1-2-2 0-4 3-8z" fill="#d21a1a" /></svg></TB>
    <div className="w-[4px] shrink-0" />
    <TB c="w-[58px]"><svg viewBox="0 0 32 32" className="w-[32px] h-[32px]"><circle cx="15" cy="14" r="12" fill="#f29a1c" /><path d="M4 18l7-5 3 6 7-12 2 7 5-4-4 12-3-4-5 8-4-7-5 3z" fill="#d01a12" /><path d="M7 26l6 4-1-5z" fill="#f2c44c" /></svg></TB>
    <div className="w-[4px] shrink-0" />
    <TB c="w-[58px]">
      <div className="w-[32px] h-[32px] rounded-[6px] bg-[#1c86f0] flex items-center justify-center">
        <div className="w-[24px] h-[24px] rounded-full border-[3px] border-white flex items-center justify-center text-white font-bold text-[13px] font-['Liberation_Sans']">K</div>
      </div>
    </TB>

    <div className="absolute left-[942px] top-0 h-full flex items-center">
      <Tray c="w-[20px]"><svg viewBox="0 0 18 16" className="w-[17px] h-[15px]"><path d="M13 1c-2 0-2 2-5 4" stroke="#aaa" fill="none" /><rect x="1" y="5" width="16" height="10" rx="2" fill="#bbb" /><path d="M3 8h12M3 10.500h12M5 13h8" stroke="#555" /></svg></Tray>
      <Tray c="w-[22px]">
        <div className="flex flex-col items-center gap-[5px]">
          <svg viewBox="0 0 12 10" className="w-[10px] h-[8px]"><rect x="3" y="1" width="8" height="5" fill="none" stroke="#fff" /><rect x="1" y="3" width="8" height="5" fill="#111" stroke="#fff" /></svg>
          <div className="w-0 h-0 border-x-[3px] border-x-transparent border-t-[3px] border-t-white" />
        </div>
      </Tray>
      <Tray c="w-[22px]"><div className="w-[16px] h-[16px] bg-black border-2 border-[#18c818] text-[#18c818] text-[8px] leading-[12px] font-bold text-center font-['Liberation_Sans']">QIY</div></Tray>
      <Tray c="w-[24px]"><svg viewBox="0 0 16 16" className="w-[16px] h-[16px]"><circle cx="8" cy="8" r="7" fill="#6cc02c" /><path d="M4 8h8M5 10.500h6M5 5.500c2-2 5-1 6 1" stroke="#fff" strokeWidth="1.200" fill="none" /></svg></Tray>
      <Tray c="w-[24px]"><div className="w-[16px] h-[16px] rounded-[3px] bg-[#1c86f0] flex items-center justify-center"><div className="w-[11px] h-[11px] rounded-full border border-white text-white text-[7px] leading-[9px] font-bold text-center font-['Liberation_Sans']">K</div></div></Tray>
      <Tray c="w-[24px]"><div className="w-[16px] h-[16px] rounded-[3px] bg-white flex items-center justify-center"><svg viewBox="0 0 14 14" className="w-[13px] h-[13px]"><circle cx="7" cy="4.500" r="2.500" fill="none" stroke="#2a6ee8" strokeWidth="1.400" /><circle cx="4" cy="9.500" r="2.500" fill="none" stroke="#2a6ee8" strokeWidth="1.400" /><circle cx="10" cy="9.500" r="2.500" fill="none" stroke="#d83a3a" strokeWidth="1.400" /></svg></div></Tray>
      <Tray c="w-[24px]"><svg viewBox="0 0 16 18" className="w-[15px] h-[17px]"><ellipse cx="8" cy="8" rx="6" ry="7" fill="#111" stroke="#333" /><ellipse cx="8" cy="11" rx="4" ry="4" fill="#fff" /><path d="M5 7h6l-3 2z" fill="#f2a21c" /><path d="M3 14c3 2 7 2 10 0l1 2H2z" fill="#e0201a" /></svg></Tray>
      <Tray c="w-[24px]"><svg viewBox="0 0 16 18" className="w-[15px] h-[17px]"><ellipse cx="8" cy="9" rx="7" ry="8.500" fill="#0a4a90" /><path d="M4 5l8 8-4 4V1l4 4-8 8" stroke="#bfe0fb" fill="none" /></svg></Tray>
      <Tray c="w-[23px]"><svg viewBox="0 0 16 16" className="w-[17px] h-[17px]"><circle cx="8" cy="8" r="7.500" fill="#f2cc1c" /><circle cx="8" cy="8" r="5.500" fill="#2a8a1c" /><path d="M5 8h6M8 5v6" stroke="#f2cc1c" strokeWidth="2" /></svg></Tray>
      <Tray c="w-[24px]"><svg viewBox="0 0 16 18" className="w-[16px] h-[17px]"><path d="M8 1l7 2v7c0 4-4 6-7 7-3-1-7-3-7-7V3z" fill="#48a848" stroke="#ddd" /><path d="M9 4L5 10h3l-1 5 4-7H8z" fill="#f2f2c0" /></svg></Tray>
      <Tray c="w-[24px]"><svg viewBox="0 0 16 18" className="w-[15px] h-[17px]"><rect x="1" y="3" width="9" height="12" fill="#fff" /><path d="M10 6h3v3h2v3h-2v2h-3z" fill="#fff" /><path d="M3 2v2M7 2v2" stroke="#fff" strokeWidth="2" /><path d="M4 7h3v4H4z" fill="#222" /></svg></Tray>
      <Tray c="w-[23px]"><svg viewBox="0 0 16 16" className="w-[15px] h-[15px]"><path d="M1 5h3l4-4v14l-4-4H1z" fill="#ddd" /><path d="M10 5c1 2 1 4 0 6M12 3c2 3 2 7 0 10" stroke="#ddd" fill="none" /></svg></Tray>
      <Tray c="w-[25px]"><svg viewBox="0 0 16 16" className="w-[16px] h-[16px]"><rect width="16" height="16" fill="#3a8ae0" /><path d="M0 10h16v6H0z" fill="#e0c04c" /><path d="M5 3h6v6H5z" fill="none" stroke="#fff" /><path d="M8 11h6" stroke="#fff" /></svg></Tray>
      <Tray c="w-[25px]"><svg viewBox="0 0 15 12" className="w-[15px] h-[12px]"><path d="M0 9h2v2H0zM3 7h2v4H3zM6 5h2v6H6zM9 3h2v8H9zM12 0h2v11h-2z" fill="#fff" /></svg></Tray>
    </div>
    <div className="absolute left-[1268px] top-0 w-[84px] h-full text-right text-[#e4e4e4] font-['Liberation_Sans'] pr-[6px]">
      <div className="text-[14px] leading-[18px] mt-[2px] pr-[20px]">7:44</div>
      <div className="text-[13px] leading-[18px]">2018/11/21</div>
    </div>
    <div className="absolute right-0 top-0 w-[13px] h-full border border-[#444] bg-[linear-gradient(#2a2c2e,#111)]" />
  </div>
);

export default function App() {
  return (
    <div className="relative w-[1366px] h-[768px] overflow-hidden bg-[#d0d0d0] font-['Liberation_Sans','Noto_Sans_CJK_SC',sans-serif] text-[#111] flex flex-col">
      {/* title bar */}
      <div className="h-[26px] shrink-0 bg-[#1a1a1a] border-t-[3px] border-[#555] flex items-center text-white">
        <div className="w-[24px] flex justify-center shrink-0"><NXLogo c="w-[19px] h-[19px]" /></div>
        <span className="text-[13px] font-['DejaVu_Sans','Noto_Sans_CJK_SC',sans-serif] text-[#eee]">NX 10 - 加工 - [A.prt（修改的）]</span>
        <div className="flex-1" />
        <span className="font-['Liberation_Sans'] font-bold text-[13px] tracking-[0.500px] mr-[25px]">SIEMENS</span>
        <div className="flex gap-[4px] pr-[3px]">
          <div className="w-[18px] h-[18px] rounded-[3px] bg-[linear-gradient(#777,#3a3a3a)] border border-[#555] flex items-end justify-center pb-[3px]"><div className="w-[8px] h-[3px] bg-white" /></div>
          <div className="w-[18px] h-[18px] rounded-[3px] bg-[linear-gradient(#777,#3a3a3a)] border border-[#555] flex items-center justify-center">
            <svg viewBox="0 0 10 10" className="w-[10px] h-[10px]"><rect x="3" y="1" width="6" height="5" fill="none" stroke="#fff" /><rect x="1" y="3" width="6" height="6" fill="#444" stroke="#fff" /></svg>
          </div>
          <div className="w-[18px] h-[18px] rounded-[3px] bg-[linear-gradient(#f0755a,#c8381c)] border border-[#a33] flex items-center justify-center">
            <svg viewBox="0 0 10 10" className="w-[11px] h-[11px]"><path d="M1 1l8 8M9 1L1 9" stroke="#fff" strokeWidth="2" /></svg>
          </div>
        </div>
      </div>
      {/* menu */}
      <div className="h-[26px] shrink-0 bg-[linear-gradient(#ececec,#dcdcdc)] flex items-center text-[12px] text-[#111] pl-[3px]">
        <Grip c="w-[4px]" />
        <Slot c="w-[23px]"><svg viewBox="0 0 16 16" className="w-[16px] h-[16px]"><rect x="3" y="1" width="4" height="12" fill="#4a55b8" /><path d="M7 6l8-1M7 9h6M7 12h4" stroke="#888" /><path d="M2 15l3-2 3 2" stroke="#e8b020" fill="none" /></svg></Slot>
        {[
          ["w-[51px]", "文件", "(F)"],
          ["w-[52px]", "编辑", "(E)"],
          ["w-[53px]", "视图", "(V)"],
          ["w-[52px]", "插入", "(S)"],
          ["w-[53px]", "格式", "(R)"],
          ["w-[51px]", "工具", "(T)"],
          ["w-[53px]", "装配", "(A)"],
          ["w-[61px]", "优品软件", ""],
          ["w-[48px]", "信息", "(I)"],
          ["w-[59px]", "分析", "(L)"],
          ["w-[65px]", "首选项", "(P)"],
        ].map(([w, t, m]) => (
          <div key={t} className={w + " shrink-0"}>{t}<i className="font-['Liberation_Sans'] text-[#333]">{m}</i></div>
        ))}
        <div className="w-[95px] shrink-0">洁强工具<i className="font-['Liberation_Sans'] text-[12px] text-[#222] tracking-[0.800px]">v2.58</i></div>
        <div className="w-[55px] shrink-0">窗口<i className="font-['Liberation_Sans'] text-[#333]">(O)</i></div>
        <div className="italic text-[#7a6a20] shrink-0">GC</div>
        <div className="flex-1" />
        <div className="flex gap-[3px] pr-[5px]">
          <div className="w-[16px] h-[16px] rounded-[3px] border border-[#888] bg-[linear-gradient(#fff,#ddd)] flex items-end justify-center pb-[2px]"><div className="w-[8px] h-[2px] bg-[#666]" /></div>
          <div className="w-[16px] h-[16px] rounded-[3px] border border-[#888] bg-[linear-gradient(#fff,#ddd)] flex items-center justify-center"><svg viewBox="0 0 10 10" className="w-[10px] h-[10px]"><rect x="3" y="1" width="6" height="5" fill="none" stroke="#666" /><rect x="1" y="4" width="6" height="5" fill="#eee" stroke="#666" /></svg></div>
          <div className="w-[16px] h-[16px] rounded-[3px] border border-[#ccc] bg-[#e8e8e8] flex items-center justify-center"><svg viewBox="0 0 10 10" className="w-[9px] h-[9px]"><path d="M1 1l8 8M9 1L1 9" stroke="#c8c8c8" strokeWidth="2" /></svg></div>
        </div>
      </div>
      {/* toolbars */}
      <div className="shrink-0 bg-[linear-gradient(#e0e0e0,#c8c8c8)]">
        <Row1 />
        <Row2 />
      </div>
      <Row3 />
      {/* status */}
      <div className="h-[23px] shrink-0 flex items-center bg-[#d8d8d8] border-y border-t-[#f0f0f0] border-b-[#8c8c8c] text-[13px] font-bold">
        <div className="w-[644px] pl-[3px] shrink-0">指定非切削参数</div>
        <div className="h-full border-l border-[#f2f2f2] pl-[2px] flex-1 flex items-center">当前：<span className="tracking-[0.200px]">HOLE_MILLING_1</span></div>
        <div className="w-[20px] h-full border-l border-[#f2f2f2] shrink-0" />
        <div className="w-[58px] h-full border-l border-[#f2f2f2] shrink-0 flex items-center pl-[2px]">
          <svg viewBox="0 0 16 16" className="w-[16px] h-[16px]"><path d="M1 4V1h3M12 1h3v3M15 12v3h-3M4 15H1v-3" stroke="#777" fill="none" /><rect x="3" y="3" width="10" height="10" fill="#eee" stroke="#222" /><rect x="5" y="5" width="6" height="6" fill="#3a7ad8" /></svg>
        </div>
      </div>
      {/* main */}
      <div className="h-[552px] shrink-0 flex">
        <Viewport />
        <LeftBar />
        <Nav />
        <RightBar />
      </div>
      <Taskbar />

      <Dialog />

      {/* upload float */}
      <div className="absolute left-[707px] top-[187px] w-[103px] h-[25px] rounded-[3px] border border-[#5c97f5] flex overflow-hidden">
        <div className="w-[30px] bg-[#4d8ff5] flex items-center justify-center">
          <svg viewBox="0 0 20 16" className="w-[20px] h-[16px]"><circle cx="10" cy="5" r="3.400" fill="none" stroke="#fff" strokeWidth="2.200" /><circle cx="5.500" cy="11" r="3.400" fill="none" stroke="#fff" strokeWidth="2.200" /><circle cx="14.500" cy="11" r="3.400" fill="none" stroke="#fff" strokeWidth="2.200" /></svg>
        </div>
        <div className="flex-1 bg-[#e4effe] text-[#8ab4f2] text-[12px] flex items-center justify-center pl-[1px]">拖拽上传</div>
      </div>

      {/* green badge */}
      <div className="absolute left-[1348px] top-[413px] w-[45px] h-[45px] rounded-full bg-[radial-gradient(circle_at_40%_40%,#5fe07a,#28b04a)] border-2 border-[#e8f8ea] text-white text-[11px] font-bold flex items-center pl-[3px] font-['Liberation_Sans']">43</div>

      {/* watermark */}
      <svg viewBox="0 0 72 62" className="absolute left-[1083px] top-[673px] w-[72px] h-[62px] pointer-events-none">
        <path d="M36 1L71 24V62H1V24z" fill="#5cbdec" opacity=".72" />
        <path d="M36 24l18 10v20L36 62 18 54V34z" fill="#8bd4f5" opacity=".7" />
        <path d="M18 34l18 10 18-10M36 44v18" stroke="#fff" strokeWidth="1.600" fill="none" opacity=".7" />
        <path d="M2 54C8 22 40 6 60 12" stroke="#fff" strokeWidth="3" fill="none" opacity=".5" />
      </svg>
      <div className="absolute left-[1163px] top-[684px] text-[40px] leading-[48px] font-bold text-white/50 tracking-[1px] pointer-events-none whitespace-nowrap">3D世界网</div>
      <div className="absolute left-[1165px] top-[729px] text-[16px] leading-[18px] font-bold text-[#8d9198]/70 tracking-[2.500px] pointer-events-none whitespace-nowrap font-['Liberation_Sans']">WWW.3DSJW.COM</div>
    </div>
  );
}
